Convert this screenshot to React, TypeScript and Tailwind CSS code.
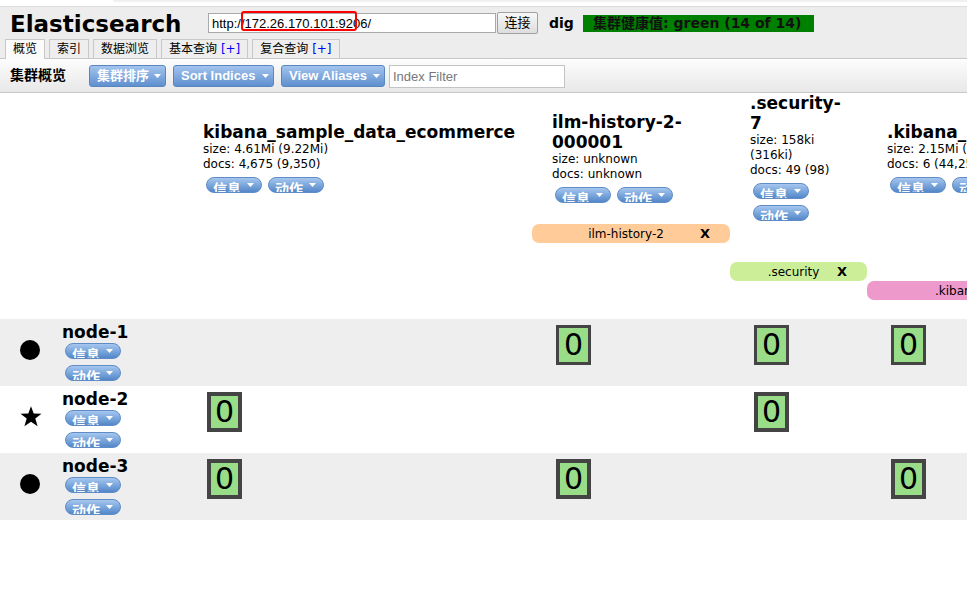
import React from "react";

const COLW = ["w-[349px]", "w-[198px]", "w-[137px]", "w-[190px]"];

function Caret({ className = "" }: { className?: string }) {
  return (
    <svg width="7" height="4" viewBox="0 0 7 4" className={className}>
      <path d="M0 0H7L3.5 4Z" fill="#ffffff" />
    </svg>
  );
}

function Pill({ label }: { label: string }) {
  return (
    <div className="flex h-[16px] w-[56px] shrink-0 items-start overflow-hidden rounded-full border border-[#5f8cc6] bg-gradient-to-b from-[#a6c7ef] to-[#5387c8] pl-[6px]">
      <span className="mt-[4px] block text-[14px] font-bold leading-[14px] text-white font-['Liberation_Sans','Noto_Sans_CJK_SC',sans-serif]">
        {label}
      </span>
      <Caret className="ml-[6px] mt-[5px]" />
    </div>
  );
}

function ToolBtn({ label, w }: { label: string; w: string }) {
  return (
    <div
      className={`${w} flex h-[22px] shrink-0 items-center justify-between rounded-[3px] border border-[#5a86c0] bg-gradient-to-b from-[#a3c4ee] to-[#5f90cf] pl-[7px] pr-[4px] text-[13px] font-bold text-white font-['Liberation_Sans','Noto_Sans_CJK_SC',sans-serif]`}
    >
      <span className="whitespace-nowrap">{label}</span>
      <Caret />
    </div>
  );
}

function Tab({ children, active = false }: { children: React.ReactNode; active?: boolean }) {
  return (
    <div
      className={
        active
          ? "relative h-[20px] border border-b-0 border-[#c8c8c8] bg-[#fbfbfb] px-[7px] text-[12px] leading-[19px]"
          : "h-[20px] border border-[#c8c8c8] bg-[#eeeeee] px-[7px] text-[12px] leading-[18px]"
      }
    >
      {children}
    </div>
  );
}

type IndexInfo = {
  title: string;
  size: string;
  docs: string;
  inner: string;
};

const INDICES: IndexInfo[] = [
  { title: "kibana_sample_data_ecommerce", size: "size: 4.61Mi (9.22Mi)", docs: "docs: 4,675 (9,350)", inner: "w-[340px]" },
  { title: "ilm-history-2-000001", size: "size: unknown", docs: "docs: unknown", inner: "w-[150px]" },
  { title: ".security-7", size: "size: 158ki (316ki)", docs: "docs: 49 (98)", inner: "w-[95px]" },
  { title: ".kibana_1", size: "size: 2.15Mi (4.30Mi)", docs: "docs: 6 (44,256)", inner: "w-[185px]" },
];

const ALIASES: ({ col: number; label: string; bg: string } | null)[] = [
  { col: 1, label: "ilm-history-2", bg: "bg-[#ffcc99]" },
  null,
  { col: 2, label: ".security", bg: "bg-[#ccee99]" },
  { col: 3, label: ".kibana", bg: "bg-[#ee99cc]" },
  null,
];

type Shard = null | "p" | "r";

const NODES: { name: string; star: boolean; bg: string; shards: Shard[] }[] = [
  { name: "node-1", star: false, bg: "bg-[#eeeeee]", shards: [null, "r", "r", "r"] },
  { name: "node-2", star: true, bg: "bg-white", shards: ["p", null, "p", null] },
  { name: "node-3", star: false, bg: "bg-[#eeeeee]", shards: ["p", "p", null, "p"] },
];

function ShardBox({ kind }: { kind: "p" | "r" }) {
  return (
    <div
      className={
        kind === "p"
          ? "ml-[7px] mt-[6px] flex h-[40px] w-[35px] items-center justify-center border-[4px] border-solid border-[#444444] bg-[#99dd88] text-[30px] leading-none font-['DejaVu_Sans',sans-serif]"
          : "ml-[7px] mt-[6px] flex h-[40px] w-[35px] items-center justify-center border-[3px] border-solid border-[#444444] bg-[#99dd88] text-[30px] leading-none font-['DejaVu_Sans',sans-serif]"
      }
    >
      0
    </div>
  );
}

export default function App() {
  return (
    <div className="relative h-[597px] w-[967px] overflow-hidden bg-white text-black font-['DejaVu_Sans','Noto_Sans_CJK_SC',sans-serif]">
      {/* top strip */}
      <div className="flex h-[6px]">
        <div className="w-[113px]" />
        <div className="h-[2px] flex-1 rounded-bl-[4px] bg-[#f0f0f0]" />
      </div>
      <div className="h-px bg-[#dcdcdc]" />

      {/* header */}
      <div className="border-b border-[#c8c8c8] bg-[#ededed]">
        <div className="flex h-[32px] items-center pl-[10px]">
          <div className="w-[198px] shrink-0 pt-[2px] text-[23px] font-bold leading-[27px]">Elasticsearch</div>
          <div className="relative shrink-0">
            <input
              readOnly
              value="http://172.26.170.101:9206/"
              className="block h-[20px] w-[288px] border border-[#a9a9a9] bg-white px-[3px] text-[13px] text-black outline-none font-['Liberation_Sans',Arial,sans-serif]"
            />
            <div className="pointer-events-none absolute left-[33px] top-[-2px] h-[20px] w-[116px] rounded-[3px] border-2 border-[#ff0000]" />
          </div>
          <button className="ml-px h-[22px] w-[41px] shrink-0 rounded-[2px] border border-[#a0a0a0] bg-gradient-to-b from-[#f7f7f7] to-[#dddddd] text-[13px] leading-[20px] font-['Liberation_Sans','Noto_Sans_CJK_SC',sans-serif]">
            连接
          </button>
          <div className="ml-[11px] w-[34px] shrink-0 text-[14px] font-bold">dig</div>
          <div className="h-[17px] w-[231px] shrink-0 whitespace-nowrap bg-[#008000] pl-[10px] text-[14px] font-bold leading-[17px] text-[#111111]">
            集群健康值: green (14 of 14)
          </div>
        </div>
        <div className="-mb-px flex h-[20px] items-end gap-[4px] pl-[5px]">
          <Tab active>概览</Tab>
          <Tab>索引</Tab>
          <Tab>数据浏览</Tab>
          <Tab>
            基本查询 <span className="text-[#0000ff]">[+]</span>
          </Tab>
          <Tab>
            复合查询 <span className="text-[#0000ff]">[+]</span>
          </Tab>
        </div>
      </div>

      {/* toolbar */}
      <div className="flex h-[34px] items-center border-b border-[#c8c8c8] bg-gradient-to-b from-[#fdfdfd] to-[#e8e8e8] pl-[10px]">
        <div className="w-[79px] shrink-0 text-[14px] font-bold">集群概览</div>
        <ToolBtn label="集群排序" w="w-[77px]" />
        <div className="w-[7px] shrink-0" />
        <ToolBtn label="Sort Indices" w="w-[101px]" />
        <div className="w-[7px] shrink-0" />
        <ToolBtn label="View Aliases" w="w-[104px]" />
        <input
          placeholder="Index Filter"
          className="ml-[4px] mt-[2px] h-[23px] w-[176px] shrink-0 border border-[#c4c4c4] bg-white px-[3px] text-[13px] outline-none placeholder:text-[#777777] font-['Liberation_Sans',Arial,sans-serif]"
        />
      </div>

      {/* index headers */}
      <div className="flex h-[128px]">
        <div className="w-[200px] shrink-0" />
        {INDICES.map((ix, i) => (
          <div key={ix.title} className={`${COLW[i]} flex shrink-0 items-center pl-[3px]`}>
            <div className={ix.inner}>
              <div className="text-[17px] font-bold leading-[20px]">{ix.title}</div>
              <div className="whitespace-normal text-[12px] leading-[15px]">{ix.size}</div>
              <div className="whitespace-nowrap text-[12px] leading-[15px]">{ix.docs}</div>
              <div className="mt-[5px] flex flex-wrap gap-x-[6px] gap-y-[6px] pl-[3px]">
                <Pill label="信息" />
                <Pill label="动作" />
              </div>
            </div>
          </div>
        ))}
      </div>

      {/* alias rows */}
      <div className="mt-[3px]">
        {ALIASES.map((a, r) => (
          <div key={r} className="flex h-[19px]">
            <div className="w-[200px] shrink-0" />
            {COLW.map((w, c) => (
              <div key={c} className={`${w} shrink-0`}>
                {a && a.col === c ? (
                  <div className={`relative -ml-[17px] flex h-[19px] w-full items-center justify-center rounded-[7px] pr-[10px] text-[12px] ${a.bg}`}>
                    <span className="whitespace-nowrap">{a.label}</span>
                    <span className="absolute right-[20px] top-0 text-[13px] font-bold leading-[19px]">X</span>
                  </div>
                ) : null}
              </div>
            ))}
          </div>
        ))}
      </div>

      {/* node rows */}
      <div>
        {NODES.map((n) => (
          <div key={n.name} className={`flex h-[67px] ${n.bg}`}>
            <div className="flex w-[200px] shrink-0">
              <div className="w-[62px] shrink-0 pl-[20px] pt-[21px]">
                {n.star ? (
                  <svg width="22" height="21" viewBox="0 0 22 21" className="-mt-[1px]">
                    <path d="M11 0.3L13.7 7.5L21.5 7.7L15.3 12.5L17.6 20.2L11 15.7L4.4 20.2L6.7 12.5L0.5 7.7L8.3 7.5Z" fill="#000000" />
                  </svg>
                ) : (
                  <svg width="20" height="20" viewBox="0 0 20 20">
                    <circle cx="10" cy="10" r="10" fill="#000000" />
                  </svg>
                )}
              </div>
              <div className="pt-[3px]">
                <div className="text-[17px] font-bold leading-[20px]">{n.name}</div>
                <div className="ml-[3px] mt-[1px] flex flex-col gap-[6px]">
                  <Pill label="信息" />
                  <Pill label="动作" />
                </div>
              </div>
            </div>
            {COLW.map((w, c) => (
              <div key={c} className={`${w} shrink-0`}>
                {n.shards[c] ? <ShardBox kind={n.shards[c] as "p" | "r"} /> : null}
              </div>
            ))}
          </div>
        ))}
      </div>
    </div>
  );
}
